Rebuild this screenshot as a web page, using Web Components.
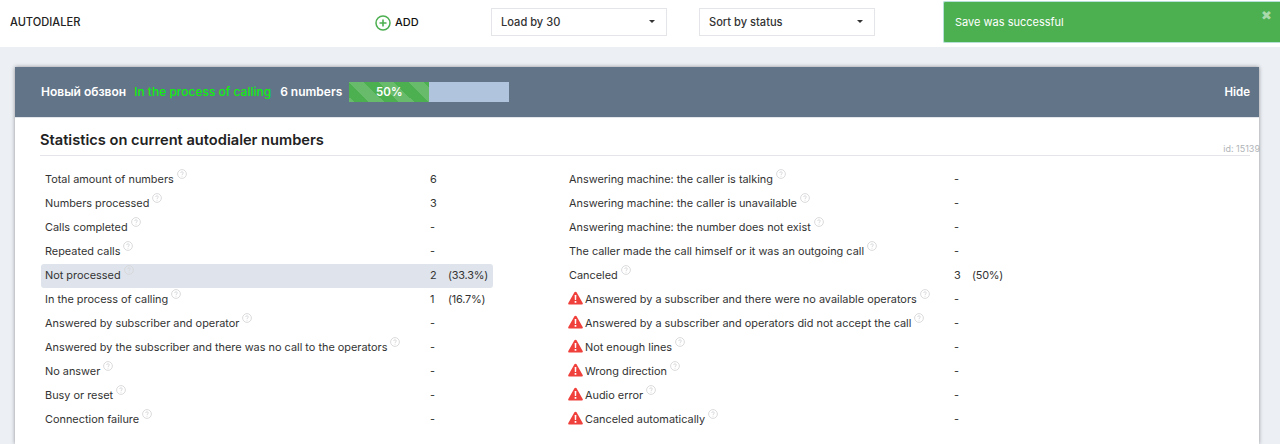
<!DOCTYPE html>
<html>
<head>
<meta charset="utf-8">
<title>Autodialer</title>
<style>
  html, body { margin: 0; height: 100%; }
  body { background: #eceff4; font-family: Inter, "Noto Sans", sans-serif; overflow: hidden; }
</style>
</head>
<body>
<top-bar></top-bar>
<save-toast>Save was successful</save-toast>
<dialer-card></dialer-card>

<script>
class TopBar extends HTMLElement {
  connectedCallback() {
    this.attachShadow({ mode: 'open' });
    this.shadowRoot.innerHTML = `
      <style>
        :host { display: flex; align-items: flex-start; height: 47px; background: #fff; color: #222; font-size: 11.1px; font-weight: 500; }
        .title { width: 365px; padding: 15px 0 0 10px; box-sizing: content-box; white-space: nowrap; }
        .add { width: 116px; display: flex; align-items: center; gap: 4px; padding: 15px 0 0; font-size: 11px; color: #111; }
        .add span { margin-top: -2px; }
        svg { display: block; }
        sort-select + sort-select { margin-left: 32px; }
        sort-select { margin-top: 8px; }
      </style>
      <div class="title">AUTODIALER</div>
      <div class="add">
        <svg width="16" height="16" viewBox="0 0 16 16" fill="none" stroke="#4caf50"><circle cx="8" cy="8" r="7" stroke-width="1.5"/><path d="M8 4.5v7M4.5 8h7" stroke-width="1.6"/></svg>
        <span>ADD</span>
      </div>
      <sort-select>Load by 30</sort-select>
      <sort-select>Sort by status</sort-select>
    `;
  }
}

class SortSelect extends HTMLElement {
  connectedCallback() {
    this.attachShadow({ mode: 'open' });
    this.shadowRoot.innerHTML = `
      <style>
        :host { display: flex; align-items: center; justify-content: space-between; box-sizing: border-box; width: 176px; height: 28px; padding: 0 11px 1px 9px; background: #fff; border: 1px solid #e3e5e8; font-size: 11.1px; font-weight: 500; color: #333; }
        i { width: 0; height: 0; border: 3px solid transparent; border-top: 3px solid #333; border-bottom: 0; }
      </style>
      <slot></slot><i></i>
    `;
  }
}

class SaveToast extends HTMLElement {
  connectedCallback() {
    this.attachShadow({ mode: 'open' });
    this.shadowRoot.innerHTML = `
      <style>
        :host { position: absolute; top: 1px; left: 943px; width: 337px; height: 42px; box-sizing: border-box; padding: 13px 11px; background: #4caf50; border: 1px solid #b5e0d8; border-right: 0; border-radius: 2px 0 0 2px; color: #fff; font-size: 11px; }
        b { position: absolute; right: 8px; top: 7px; color: #a9d8ab; font-size: 13px; line-height: 13px; font-family: "DejaVu Sans", sans-serif; }
      </style>
      <slot></slot><b>✖</b>
    `;
  }
}

class DialerCard extends HTMLElement {
  connectedCallback() {
    const left = [
      ['Total amount of numbers', '6'],
      ['Numbers processed', '3'],
      ['Calls completed', '-'],
      ['Repeated calls', '-'],
      ['Not processed', '2', '(33.3%)', 'hl'],
      ['In the process of calling', '1', '(16.7%)'],
      ['Answered by subscriber and operator', '-'],
      ['Answered by the subscriber and there was no call to the operators', '-'],
      ['No answer', '-'],
      ['Busy or reset', '-'],
      ['Connection failure', '-']
    ];
    const right = [
      ['Answering machine: the caller is talking', '-'],
      ['Answering machine: the caller is unavailable', '-'],
      ['Answering machine: the number does not exist', '-'],
      ['The caller made the call himself or it was an outgoing call', '-'],
      ['Canceled', '3', '(50%)'],
      ['Answered by a subscriber and there were no available operators', '-', '', 'warn'],
      ['Answered by a subscriber and operators did not accept the call', '-', '', 'warn'],
      ['Not enough lines', '-', '', 'warn'],
      ['Wrong direction', '-', '', 'warn'],
      ['Audio error', '-', '', 'warn'],
      ['Canceled automatically', '-', '', 'warn']
    ];
    const rows = list => list.map(([label, val, pct, kind]) =>
      `<stat-row value="${val}" pct="${pct || ''}" ${kind === 'hl' ? 'highlight' : ''} ${kind === 'warn' ? 'warn' : ''}>${label}</stat-row>`
    ).join('');
    this.attachShadow({ mode: 'open' });
    this.shadowRoot.innerHTML = `
      <style>
        :host { display: block; height: 377px; margin: 20px 21px 0 15px; background: #fff; box-shadow: 0 0 4px rgba(0,0,0,.4); }
        header { display: flex; align-items: center; box-sizing: border-box; height: 51px; padding: 0 9px 1px 26px; background: #627488; border-bottom: 1px solid #e3e6ea; color: #fff; font-size: 12px; font-weight: 600; }
        .name { margin-right: 8px; }
        .status { margin-right: 9px; color: #10ee10; font-weight: 500; }
        .count { margin-right: 7px; }
        .hide { margin-left: auto; font-size: 11.5px; }
        .bar { width: 160px; height: 20px; background: #b0c4de; }
        .fill { display: flex; align-items: center; justify-content: center; width: 80px; height: 20px; font-size: 11.5px; background-color: #4caf50; background-image: linear-gradient(45deg, rgba(255,255,255,.15) 25%, transparent 25%, transparent 50%, rgba(255,255,255,.15) 50%, rgba(255,255,255,.15) 75%, transparent 75%); background-size: 30px 30px; }
        main { padding: 13px 9px 0 25px; }
        h2 { display: flex; justify-content: space-between; align-items: flex-end; margin: 0; padding-bottom: 6px; border-bottom: 1px solid #e3e5e8; font-size: 14.65px; line-height: 18px; font-weight: 600; color: #222; }
        .id { margin: 0 -10px -5px 0; font-size: 9px; line-height: 11px; font-weight: 400; color: #b0b4b8; }
        .cols { display: grid; grid-template-columns: 452px 452px; column-gap: 72px; margin: 12px 0 0 1px; }
      </style>
      <header>
        <span class="name">Новый обзвон</span>
        <span class="status">In the process of calling</span>
        <span class="count">6 numbers</span>
        <div class="bar"><div class="fill">50%</div></div>
        <span class="hide">Hide</span>
      </header>
      <main>
        <h2>Statistics on current autodialer numbers <span class="id">id: 15139</span></h2>
        <div class="cols">
          <div>${rows(left)}</div>
          <div>${rows(right)}</div>
        </div>
      </main>
    `;
  }
}

class StatRow extends HTMLElement {
  connectedCallback() {
    const warn = this.hasAttribute('warn') ? `
      <svg class="warn" width="15" height="14" viewBox="0 0 14 13"><path d="M7 .6c.5 0 .8.2 1 .6l5.7 9.9c.4.7-.1 1.5-.9 1.5H1.2c-.8 0-1.3-.8-.9-1.5L6 1.2c.2-.4.5-.6 1-.6z" fill="#f0403c"/><path d="M6.2 3.8h1.6l-.2 4.6H6.4zM6.2 9.4h1.6V11H6.2z" fill="#fff"/></svg>` : '';
    this.attachShadow({ mode: 'open' });
    this.shadowRoot.innerHTML = `
      <style>
        :host { display: grid; grid-template-columns: 385px 18px 1fr; align-items: center; box-sizing: border-box; height: 24px; padding: 0 0 2px 4px; border-radius: 3px; font-size: 10.9px; color: #333; }
        :host([highlight]) { background: #dfe4ec; }
        .label { display: flex; align-items: center; gap: 2px; white-space: nowrap; }
        .warn { margin: -3px 0 0 -1px; }
        .help { margin: -11px 0 0 1px; }
        .val { white-space: nowrap; letter-spacing: -.2px; }
      </style>
      <div class="label">${warn}<slot></slot>
        <svg class="help" width="10" height="10" viewBox="0 0 10 10" fill="none" stroke="#d6d7d9" stroke-width=".9"><circle cx="5" cy="5" r="4.4"/><path d="M3.7 4c0-1.7 2.6-1.7 2.6 0 0 1-1.3.9-1.3 2M5 6.8v.9"/></svg>
      </div>
      <div class="val">${this.getAttribute('value')}</div>
      <div class="val">${this.getAttribute('pct') || ''}</div>
    `;
  }
}

customElements.define('sort-select', SortSelect);
customElements.define('top-bar', TopBar);
customElements.define('save-toast', SaveToast);
customElements.define('stat-row', StatRow);
customElements.define('dialer-card', DialerCard);
</script>
</body>
</html>
